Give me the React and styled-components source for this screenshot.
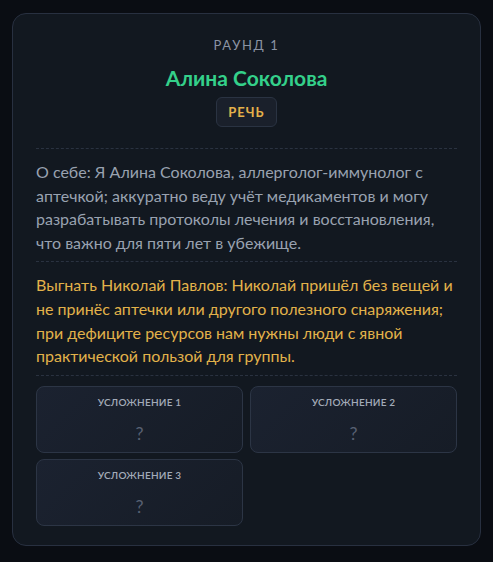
import React from "react";
import styled, { createGlobalStyle } from "styled-components";

const GlobalStyle = createGlobalStyle`
  html, body {
    margin: 0;
    padding: 0;
    background: #0a0d13;
  }
  body {
    font-family: Lato, "Noto Sans", sans-serif;
    -webkit-font-smoothing: antialiased;
  }
  * { box-sizing: border-box; }
`;

const Page = styled.div`
  padding: 13px 12px 17px;
`;

const Card = styled.section`
  background: #121820;
  border: 1px solid #283040;
  border-radius: 14px;
  padding: 22px 23px 19px;
  display: flex;
  flex-direction: column;
`;

const Header = styled.header`
  display: flex;
  flex-direction: column;
  align-items: center;
  padding-bottom: 21px;
`;

const Round = styled.div`
  font-size: 13px;
  letter-spacing: 1.6px;
  color: #8a93a3;
  text-transform: uppercase;
  line-height: 18px;
`;

const Name = styled.h1`
  margin: 11px 0 0;
  font-size: 21px;
  font-weight: 700;
  color: #34d08a;
  line-height: 26px;
`;

const Badge = styled.span`
  margin-top: 6px;
  padding: 5px 11px;
  border-radius: 6px;
  background: #1a202b;
  border: 1px solid #2a3342;
  color: #e4b14a;
  font-size: 13px;
  font-weight: 700;
  letter-spacing: 1px;
  line-height: 18px;
`;

const Section = styled.div`
  border-top: 1px dashed #2a3240;
  padding: 11px 0 6.5px;
`;

const Text = styled.p`
  margin: 0;
  font-size: 16px;
  line-height: 23.7px;
  color: ${(p) => (p.$tone === "accent" ? "#e2b24a" : "#99a2b0")};
`;

const Grid = styled.div`
  border-top: 1px dashed #2a3240;
  padding-top: 10px;
  display: grid;
  grid-template-columns: 1fr 1fr;
  gap: 6px 7px;
`;

const Slot = styled.div`
  height: 67px;
  border: 1px solid #2c3545;
  border-radius: 8px;
  background: linear-gradient(135deg, #1b2230 0%, #161c26 100%);
  display: flex;
  flex-direction: column;
  align-items: center;
  padding-top: 8px;
`;

const SlotLabel = styled.div`
  font-size: 10px;
  font-weight: 600;
  letter-spacing: 0.2px;
  color: #a3abb8;
  text-transform: uppercase;
  line-height: 14px;
`;

const SlotValue = styled.div`
  margin-top: 12px;
  font-size: 18px;
  color: #576072;
  line-height: 24px;
`;

const complications = ["Усложнение 1", "Усложнение 2", "Усложнение 3"];

export default function App() {
  return (
    <>
      <GlobalStyle />
      <Page>
        <Card>
          <Header>
            <Round>Раунд 1</Round>
            <Name>Алина Соколова</Name>
            <Badge>РЕЧЬ</Badge>
          </Header>
          <Section>
            <Text>
              О себе: Я Алина Соколова, аллерголог-иммунолог с аптечкой;
              аккуратно веду учёт медикаментов и могу разрабатывать протоколы
              лечения и восстановления, что важно для пяти лет в убежище.
            </Text>
          </Section>
          <Section>
            <Text $tone="accent">
              Выгнать Николай Павлов: Николай пришёл без вещей и не принёс
              аптечки или другого полезного снаряжения; при дефиците ресурсов
              нам нужны люди с явной практической пользой для группы.
            </Text>
          </Section>
          <Grid>
            {complications.map((c) => (
              <Slot key={c}>
                <SlotLabel>{c}</SlotLabel>
                <SlotValue>?</SlotValue>
              </Slot>
            ))}
          </Grid>
        </Card>
      </Page>
    </>
  );
}
